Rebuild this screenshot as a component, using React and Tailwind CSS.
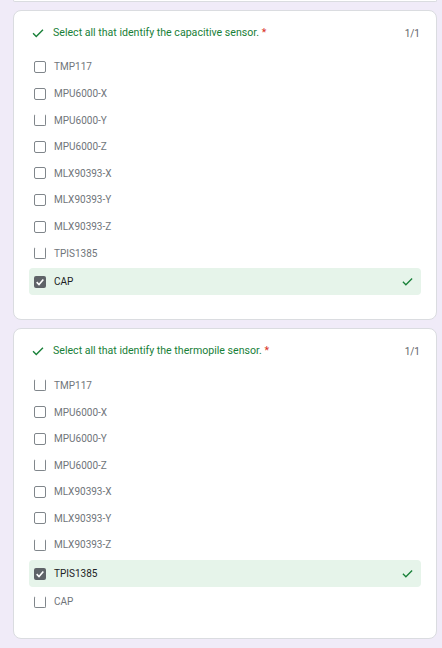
import React from "react";

const Check = ({ className }) => (
  <svg viewBox="0 0 24 24" className={className} fill="none">
    <path d="M3.5 12.5 L9 18 L20.5 6.5" stroke="#188038" strokeWidth="2.4" />
  </svg>
);

const Box = ({ checked, noTop }) => {
  if (checked) {
    return (
      <div className="w-[12px] h-[12px] rounded-[2px] bg-[#5f6368] flex items-center justify-center shrink-0">
        <svg viewBox="0 0 12 12" className="w-[10px] h-[10px]">
          <path d="M2 6.2 L4.8 9 L10 3" stroke="#fff" strokeWidth="1.9" fill="none" />
        </svg>
      </div>
    );
  }
  return (
    <div
      className={
        "w-[12px] h-[12px] rounded-[2px] border-[1.5px] border-[#80868b] shrink-0 " +
        (noTop ? "border-t-transparent" : "")
      }
    />
  );
};

const Card = ({ title, options, correct, noTop }) => (
  <div className="ml-[13px] mr-[5px] bg-white rounded-[8px] border border-[#dadce0] pt-[15px] pb-[23px]">
    <div className="flex items-center h-[14px] pl-[17px] pr-[16px]">
      <Check className="w-[14px] h-[14px] shrink-0" />
      <div className="ml-[8px] text-[10.6px] text-[#188038] leading-[14px] flex-1 font-['Roboto',sans-serif]">
        {title} <span className="text-[#d93025]">*</span>
      </div>
      <div className="text-[10px] text-[#5f6368] font-['Roboto',sans-serif]">1/1</div>
    </div>
    <div className="mt-[13.7px] px-[15px]">
      {options.map((o) =>
        o === correct ? (
          <div
            key={o}
            className="h-[27px] mt-[2px] mb-[1px] rounded-[4px] bg-[#e6f4ea] flex items-center pl-[5px] pr-[7px]"
          >
            <Box checked />
            <span className="ml-[8px] text-[10px] text-[#202124] font-['Roboto',sans-serif] flex-1">{o}</span>
            <Check className="w-[13px] h-[13px]" />
          </div>
        ) : (
          <div key={o} className="h-[26.6px] flex items-center pl-[5px]">
            <Box noTop={noTop.includes(o)} />
            <span className="ml-[8px] text-[10px] text-[#70757a] font-['Roboto',sans-serif]">{o}</span>
          </div>
        )
      )}
    </div>
  </div>
);

const opts = [
  "TMP117",
  "MPU6000-X",
  "MPU6000-Y",
  "MPU6000-Z",
  "MLX90393-X",
  "MLX90393-Y",
  "MLX90393-Z",
  "TPIS1385",
  "CAP",
];

export default function App() {
  return (
    <div className="w-[442px] h-[648px] bg-[#f0ebf8] overflow-hidden">
      <div className="ml-[13px] mr-[5px] h-[2px] bg-white border-b border-x border-[#dadce0] rounded-b-[8px]" />
      <div className="h-[8px]" />
      <Card
        title="Select all that identify the capacitive sensor."
        options={opts}
        correct="CAP"
        noTop={["MPU6000-Y", "TPIS1385"]}
      />
      <div className="h-[8px]" />
      <Card
        title="Select all that identify the thermopile sensor."
        options={opts}
        correct="TPIS1385"
        noTop={["TMP117", "MPU6000-Z", "MLX90393-Z", "CAP"]}
      />
    </div>
  );
}
